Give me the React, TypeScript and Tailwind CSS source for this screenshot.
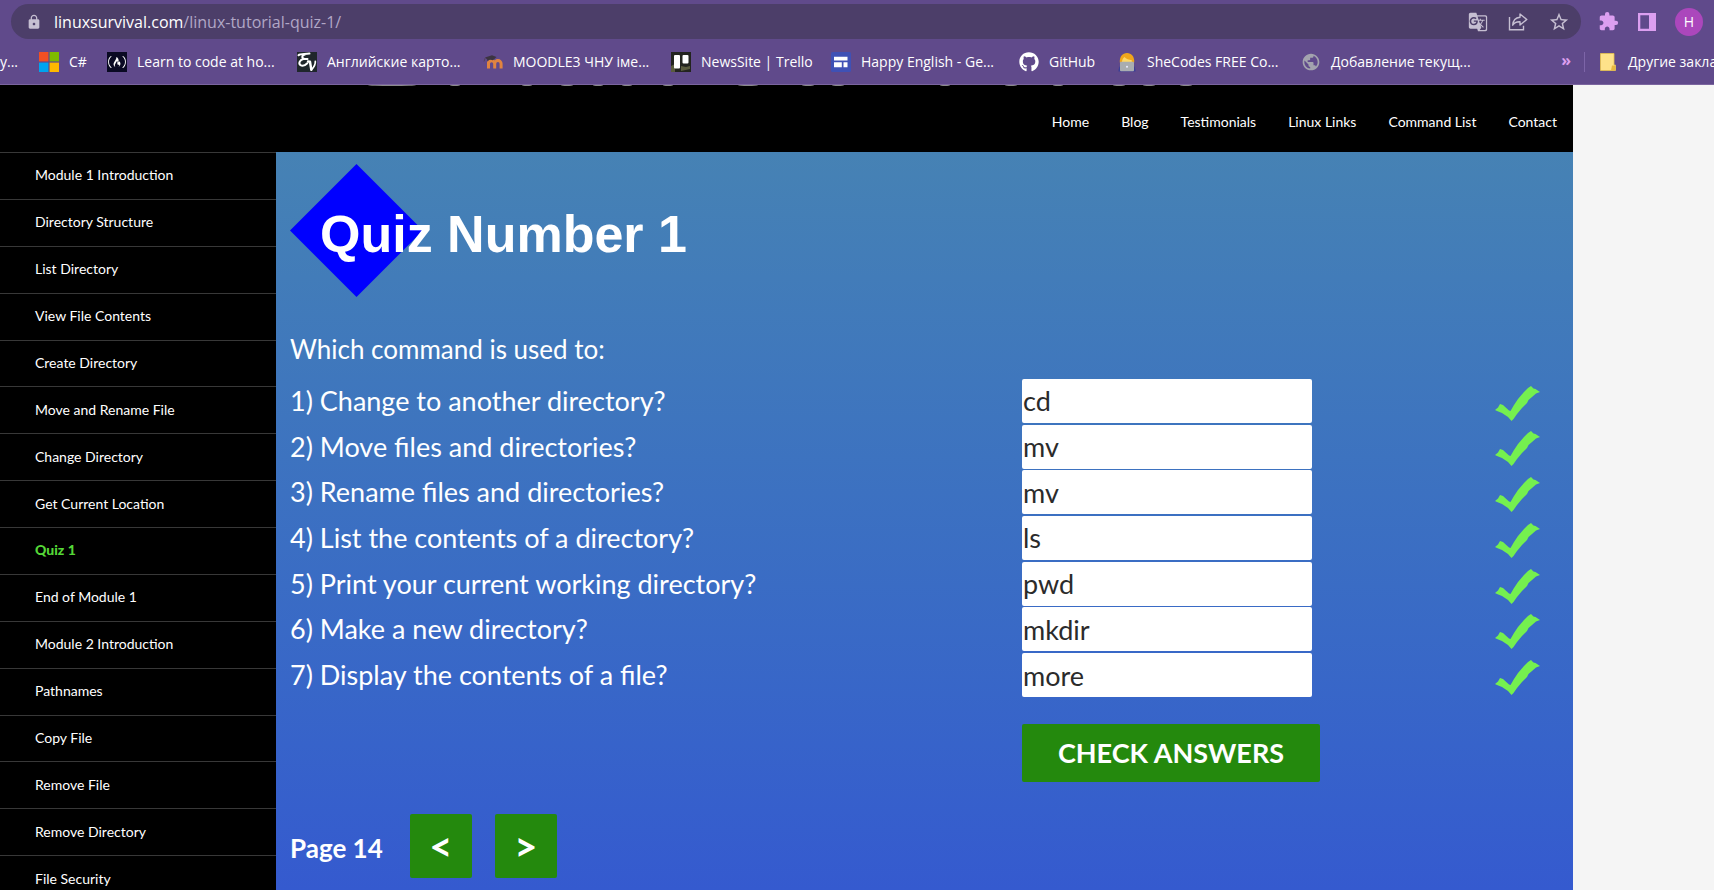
import type { ReactNode } from "react";
import { FaFreeCodeCamp, FaGithub } from "react-icons/fa";
import { MdExtension, MdGTranslate, MdLock, MdPublic, MdStarBorder } from "react-icons/md";

function MicrosoftIcon() {
  return (
    <svg viewBox="0 0 20 20" className="size-5">
      <path fill="#f25022" d="M0 0h9.4v9.4H0z" />
      <path fill="#7fba00" d="M10.6 0H20v9.4h-9.4z" />
      <path fill="#00a4ef" d="M0 10.6h9.4V20H0z" />
      <path fill="#ffb900" d="M10.6 10.6H20V20h-9.4z" />
    </svg>
  );
}

function FreeCodeCampIcon() {
  return (
    <span className="flex size-5 items-center justify-center bg-[#0a0a23] text-white">
      <FaFreeCodeCamp className="size-[18px]" />
    </span>
  );
}

function EnglishCardsIcon() {
  return (
    <svg viewBox="0 0 20 20" className="size-5">
      <path fill="#1f262b" d="M0 0h20v20H0z" />
      <g fill="none" stroke="#fff" strokeLinecap="round" strokeLinejoin="round">
        <path strokeWidth="2" d="M1.5 3.2C3.5 1.2 8 2.6 12.5 1.6M8 2.4C4.800 3 4.200 6.500 7.600 7M10.500 7H6.500C3 7.500 1 11.500 3.500 13.200C5.500 14.300 8.500 13 10.300 11.200" />
        <path strokeWidth="2.400" d="M11 9.500l2 .3l1.300 8" />
        <path strokeWidth="1.700" d="M14.500 17.800C16.500 15.500 18.600 12 18.300 9.300" />
      </g>
    </svg>
  );
}

function MoodleIcon() {
  return (
    <svg viewBox="0 0 20 20" className="size-5">
      <path fill="none" stroke="#e08440" strokeWidth="3" d="M5.500 16.500V9.500M5.500 16.500v-4.700a3.100 3.100 0 0 1 6.200 0v4.700M11.700 16.500v-4.700a3.200 3.200 0 0 1 6.400 0v4.700" />
      <path fill="#3c3441" d="M2 5.500L9 3.200l4.500 1.700l-3.600 3.400c-2-1-4-.6-5.200.9L4 7.200z" />
      <path fill="none" stroke="#54405f" strokeWidth="1" d="M2.300 5.700L1 9.500" />
    </svg>
  );
}

function TrelloIcon() {
  return (
    <svg viewBox="0 0 20 20" className="size-5">
      <path fill="#23241f" d="M0 0h20v20H0z" />
      <path fill="#5a5b3e" d="M0 14l4-2v8H0zM10 14l5 1 4-1v3l-9 2z" />
      <rect x="3" y="3" width="6" height="13.500" rx="1" fill="#fff" />
      <rect x="11.500" y="3" width="6" height="8.500" rx="1" fill="#fff" />
    </svg>
  );
}

function SitesIcon() {
  return (
    <svg viewBox="0 0 20 20" className="size-5">
      <rect width="20" height="20" rx="1.500" fill="#3f51b5" />
      <path fill="#fff" d="M3 4.800h13.500v3.700H3zM3 10.300h7.800v5H3zM12.500 10.300h4v5h-4z" />
    </svg>
  );
}

function CoderIcon() {
  return (
    <svg viewBox="0 0 20 20" className="size-5">
      <path fill="#f0a61c" d="M2.800 10.500C2.500 4.500 5.500 1 10 1s7.500 3.500 7.200 9.500z" />
      <path fill="#fdd868" d="M5 9.500c.3-2 1.300-3.700 2.500-4.500c1.500 1.800 4.500 3 7.300 3.200V10.500H5z" />
      <path fill="#3a3f96" d="M1.500 19.500c0-3 .6-4.500 1.800-5.500h13.400c1.200 1 1.800 2.500 1.800 5.500z" />
      <rect x="3" y="9.800" width="14" height="9.400" rx="1" fill="#a9adb0" />
      <circle cx="10" cy="14.800" r="1" fill="#eef" />
    </svg>
  );
}

function FolderIcon() {
  return (
    <svg viewBox="0 0 16 18" className="h-[18px] w-4 shrink-0">
      <path fill="#fee28a" stroke="#e6c24e" strokeWidth=".8" d="M.5.5h13.500v11.500h1.500v5.500H.5z" />
      <path fill="#e8b93e" d="M12 12.500h3v4.800h-4z" />
    </svg>
  );
}

function ShareIcon() {
  return (
    <svg viewBox="0 0 20 20" className="size-5" fill="none" stroke="currentColor" strokeWidth="1.400">
      <path d="M1.500 5v12.700h14v-4" />
      <path strokeLinejoin="round" d="M12 2l6.800 5.500L12 13v-3.200c-3.500-.2-5.700.8-7.300 3.400C5 8.800 7.500 5.600 12 5.200z" />
    </svg>
  );
}

function SidePanelIcon() {
  return (
    <svg viewBox="0 0 18 18" className="size-[18px]">
      <path fill="#dc9ff0" fillRule="evenodd" d="M0 0h18v18H0zM2.300 2.300v13.400h8.700V2.300z" />
    </svg>
  );
}

function CheckIcon() {
  return (
    <svg viewBox="0 0 46 36" className="mb-[3px] h-9 w-[46px] self-end" role="img" aria-label="Correct">
      <path
        fill="#75f04f"
        d="M0 25L3 22.500L5 19L8 20L14 25.500L15.500 26L19 20L23 14L29 7L33 3L36 1L38.500 3.500L40.500 4L45 7L41 8.500L37 12L33.500 15L32 18L27 23L22 29L18.500 34L16.500 36L13 32L11.500 31L7 28L2 26Z"
      />
    </svg>
  );
}

type Bookmark = { label: string; icon: ReactNode; width: string };

const bookmarks: Bookmark[] = [
  { label: "C#", icon: <MicrosoftIcon />, width: "w-[68px]" },
  { label: "Learn to code at ho...", icon: <FreeCodeCampIcon />, width: "w-[190px]" },
  { label: "Английские карто...", icon: <EnglishCardsIcon />, width: "w-[186px]" },
  { label: "MOODLE3 ЧНУ іме...", icon: <MoodleIcon />, width: "w-[188px]" },
  { label: "NewsSite | Trello", icon: <TrelloIcon />, width: "w-[160px]" },
  { label: "Happy English - Ge...", icon: <SitesIcon />, width: "w-[188px]" },
  { label: "GitHub", icon: <FaGithub className="size-5" />, width: "w-[98px]" },
  { label: "SheCodes FREE Co...", icon: <CoderIcon />, width: "w-[184px]" },
  { label: "Добавление текущ...", icon: <MdPublic className="size-5 text-[#a3a3ae]" />, width: "w-[190px]" },
];

function BrowserBar() {
  return (
    <header className="flex h-[85px] shrink-0 flex-col overflow-hidden border-b border-[#7b659f] bg-[#604a8b] pt-1 font-['Open_Sans',sans-serif] text-white">
      <div className="flex items-center px-[11px]">
        <div className="flex h-[35px] grow items-center rounded-full bg-[#4c3e69] pr-[11px] pl-[15px] text-[#c6bfd2]">
          <MdLock className="size-4" />
          <input
            aria-label="Address"
            className="sr-only"
            defaultValue="linuxsurvival.com/linux-tutorial-quiz-1/"
          />
          <p className="grow pl-3 text-base leading-6 text-[#b1a7c6]">
            <span className="text-white">linuxsurvival.com</span>/linux-tutorial-quiz-1/
          </p>
          <div className="flex items-center gap-5">
            <button type="button" aria-label="Translate"><MdGTranslate className="size-5" /></button>
            <button type="button" aria-label="Share"><ShareIcon /></button>
            <button type="button" aria-label="Bookmark this tab"><MdStarBorder className="size-[22px]" /></button>
          </div>
        </div>
        <div className="flex items-center gap-[19px] pl-[17px]">
          <button type="button" aria-label="Extensions"><MdExtension className="size-[21px] text-[#dc9ff0]" /></button>
          <button type="button" aria-label="Side panel"><SidePanelIcon /></button>
          <button type="button" aria-label="Profile" className="size-7 rounded-full bg-[#ab47bc] text-sm">H</button>
        </div>
      </div>
      <nav aria-label="Bookmarks" className="flex h-[46px] items-center text-sm leading-5 whitespace-nowrap">
        <a href="#bookmark" className="w-[39px] shrink-0">у...</a>
        {bookmarks.map((b) => (
          <a key={b.label} href="#bookmark" className={`flex shrink-0 items-center gap-[10px] ${b.width}`}>
            {b.icon}
            <span>{b.label}</span>
          </a>
        ))}
        <button type="button" aria-label="More bookmarks" className="ml-auto pr-[13px] pb-1 text-base leading-5 font-bold text-[#dc9ff0]">»</button>
        <a href="#other" className="flex h-5 w-[130px] shrink-0 items-center gap-3 border-l border-[#7d65a8] pl-[15px]">
          <FolderIcon />
          <span>Другие закладки</span>
        </a>
      </nav>
    </header>
  );
}

const menu = ["Home", "Blog", "Testimonials", "Linux Links", "Command List", "Contact"];

const lessons = [
  "Module 1 Introduction",
  "Directory Structure",
  "List Directory",
  "View File Contents",
  "Create Directory",
  "Move and Rename File",
  "Change Directory",
  "Get Current Location",
  "Quiz 1",
  "End of Module 1",
  "Module 2 Introduction",
  "Pathnames",
  "Copy File",
  "Remove File",
  "Remove Directory",
  "File Security",
];

const questions = [
  ["Change to another directory?", "cd"],
  ["Move files and directories?", "mv"],
  ["Rename files and directories?", "mv"],
  ["List the contents of a directory?", "ls"],
  ["Print your current working directory?", "pwd"],
  ["Make a new directory?", "mkdir"],
  ["Display the contents of a file?", "more"],
];

const bannerEdges = [
  [392, 24], [455, 5], [527, 5], [567, 6], [598, 5], [627, 5], [668, 5], [748, 10], [808, 6],
  [838, 6], [945, 5], [1011, 6], [1058, 5], [1119, 6], [1149, 6], [1186, 6],
];

function Quiz() {
  return (
    <main className="grow bg-linear-to-b from-[#4682b4] to-[#355acf] px-[14px] pt-3 text-[27px] leading-[34px] text-white">
      <h1 className="relative flex h-[133px] items-center pt-1.5 pl-[30px] font-['Liberation_Sans',Arial,sans-serif] text-[52px] font-bold">
        <svg viewBox="0 0 133 133" className="absolute top-0 left-0 size-[133px]">
          <path fill="#0000ff" d="M66.500 0L133 66.500L66.500 133L0 66.500z" />
        </svg>
        <span className="relative">Quiz Number 1</span>
      </h1>
      <form onSubmit={(e) => e.preventDefault()}>
        <p className="pt-[35px] text-[26px] leading-[34px]">Which command is used to:</p>
        <ol className="mt-3 grid h-[320px] auto-rows-fr">
          {questions.map(([text, answer], i) => (
            <li key={text} className="grid grid-cols-[minmax(0,732fr)_minmax(0,473fr)_64px] items-center">
              <label htmlFor={`answer-${i}`}>{`${i + 1}) ${text}`}</label>
              <input
                id={`answer-${i}`}
                defaultValue={answer}
                className="h-11 w-[290px] rounded-xs bg-white px-px text-[#2b2b2b]"
              />
              <CheckIcon />
            </li>
          ))}
        </ol>
        <div className="grid grid-cols-[minmax(0,732fr)_minmax(0,473fr)_64px] pt-[26px]">
          <button type="submit" className="col-start-2 h-[58px] w-[298px] rounded-xs bg-[#24890d] font-bold">
            CHECK ANSWERS
          </button>
        </div>
      </form>
      <div className="flex items-center pt-8 font-bold">
        <span className="pt-1 text-[26px] leading-[34px]">Page 14</span>
        <div className="flex gap-[23px] pl-[27px] text-[40px] leading-[34px]">
          <button type="button" aria-label="Previous page" className="h-16 w-[62px] rounded-xs bg-[#24890d]">&lt;</button>
          <button type="button" aria-label="Next page" className="h-16 w-[62px] rounded-xs bg-[#24890d]">&gt;</button>
        </div>
      </div>
    </main>
  );
}

export default function App() {
  return (
    <div className="flex h-screen flex-col overflow-hidden bg-[#f5f5f5]">
      <BrowserBar />
      <div className="flex min-h-0 max-w-[1573px] grow flex-col overflow-hidden bg-black font-['Lato',sans-serif] text-white">
        <div className="relative flex h-[67px] shrink-0 items-center justify-end pt-1.5 pr-4">
          <svg viewBox="0 0 1573 2" className="absolute top-0 left-0 h-[2px] w-full" aria-hidden="true">
            {bannerEdges.map(([x, r]) => (
              <ellipse key={x} cx={x} cy="0" rx={r} ry="1" fill="#8a8a8a" />
            ))}
          </svg>
          <nav aria-label="Site" className="flex gap-8 text-sm leading-5">
            {menu.map((m) => (
              <a key={m} href="#page">{m}</a>
            ))}
          </nav>
        </div>
        <div className="flex min-h-0 grow">
          <nav aria-label="Lessons" className="w-[276px] shrink-0 text-sm leading-5">
            <ul className="grid h-[750px] auto-rows-fr">
              {lessons.map((l) => (
                <li key={l} className="border-t border-[#383838]">
                  <a
                    href="#lesson"
                    className={l === "Quiz 1" ? "flex h-full items-center pb-px pl-[35px] font-black text-[#55d737]" : "flex h-full items-center pb-px pl-[35px]"}
                  >
                    {l}
                  </a>
                </li>
              ))}
            </ul>
          </nav>
          <Quiz />
        </div>
      </div>
    </div>
  );
}
